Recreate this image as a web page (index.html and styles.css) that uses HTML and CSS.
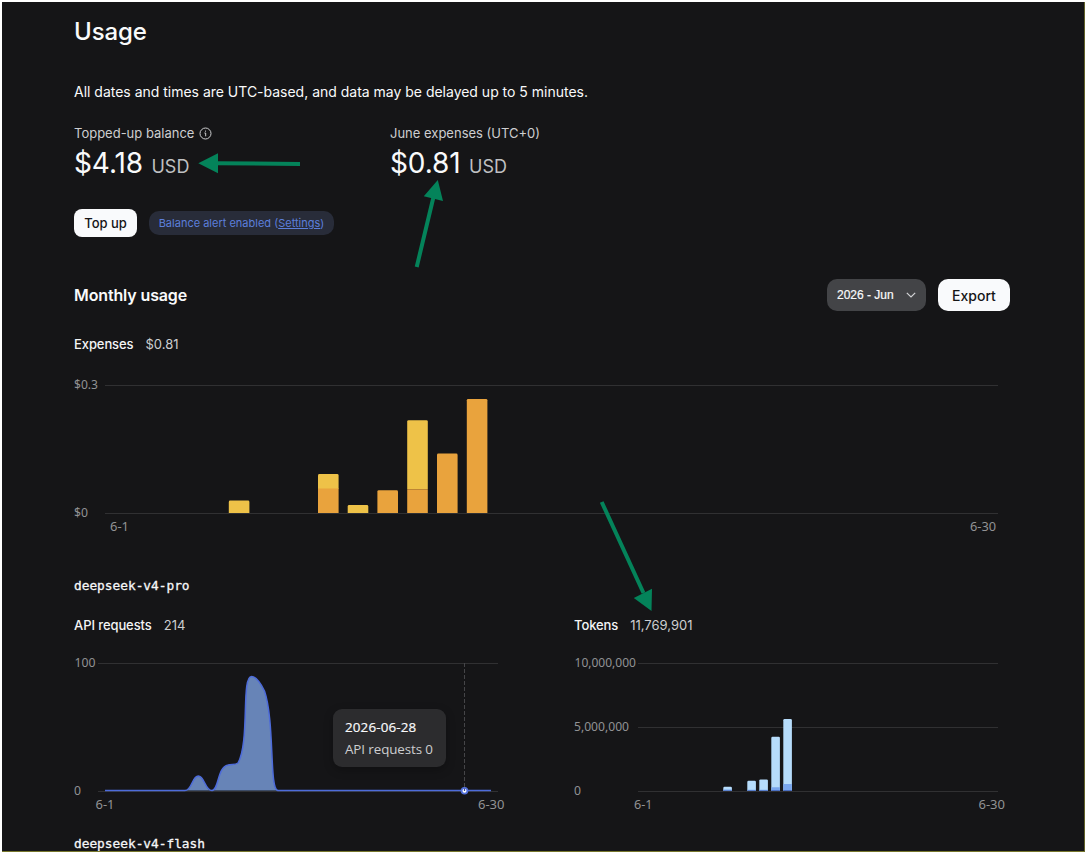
FILE: index.html
```html
<!DOCTYPE html>
<html lang="en">
<head>
<meta charset="utf-8">
<title>Usage</title>
<link rel="stylesheet" href="styles.css">
</head>
<body>
<main class="page">
  <h1 class="title">Usage</h1>
  <p class="note"><span>All dates and times are UTC-based, and data may be delayed up to 5 minutes.</span></p>

  <section class="stats">
    <div class="stat">
      <div class="stat-label"><span>Topped-up balance</span>
        <svg class="info" width="13" height="13" viewBox="0 0 13 13"><circle cx="6.5" cy="6.5" r="5.5"/><path d="M5.4 6h1.3v3.3M6.5 3.6v1.1"/></svg>
      </div>
      <div class="stat-value"><span class="amount">$4.18</span><span class="currency">USD</span></div>
    </div>
    <div class="stat">
      <div class="stat-label"><span>June expenses (UTC+0)</span></div>
      <div class="stat-value"><span class="amount">$0.81</span><span class="currency">USD</span></div>
    </div>
  </section>

  <div class="actions">
    <button class="btn btn-small">Top up</button>
    <div class="alert"><span>Balance alert enabled (<a>Settings</a>)</span></div>
  </div>

  <section class="monthly">
    <h2 class="subtitle">Monthly usage</h2>
    <div class="controls">
      <div class="select"><span>2026 - Jun</span>
        <svg width="12" height="8" viewBox="0 0 12 8"><path d="M1.8 1.8 6 6l4.2-4.2"/></svg>
      </div>
      <button class="btn btn-large">Export</button>
    </div>
  </section>

  <div class="metric"><b>Expenses</b><span>$0.81</span></div>
  <svg class="chart" width="936" height="223" viewBox="74 353 936 223">
    <path class="grid" d="M105 385.5H998M105 513.5H998"/>
    <g class="axis">
      <text x="74" y="389.3" textLength="24" lengthAdjust="spacingAndGlyphs">$0.3</text>
      <text x="74" y="517.3" textLength="14" lengthAdjust="spacingAndGlyphs">$0</text>
      <text x="110" y="531.3" textLength="19" lengthAdjust="spacingAndGlyphs">6-1</text>
      <text x="970" y="531.3" textLength="26" lengthAdjust="spacingAndGlyphs">6-30</text>
    </g>
    <g class="flash">
      <path d="M228.8 513V502q0-1.4 1.4-1.4h17.8q1.4 0 1.4 1.4v11z"/>
      <path d="M318 489V475.4q0-1.4 1.4-1.4h17.8q1.4 0 1.4 1.4V489z"/>
      <path d="M347.7 513V506.4q0-1.4 1.4-1.4h17.8q1.4 0 1.4 1.4V513z"/>
      <path d="M407.2 489V421.6q0-1.4 1.4-1.4h17.8q1.4 0 1.4 1.4V489z"/>
    </g>
    <g class="pro">
      <path d="M318 488.5h20.6V513H318z"/>
      <path d="M377.4 513V491.6q0-1.4 1.4-1.4h17.8q1.4 0 1.4 1.4V513z"/>
      <path d="M407.2 489.2h20.6V513h-20.6z"/>
      <path d="M437 513V454.9q0-1.4 1.4-1.4h17.8q1.4 0 1.4 1.4V513z"/>
      <path d="M466.8 513V400.3q0-1.4 1.4-1.4H486q1.4 0 1.4 1.4V513z"/>
    </g>
  </svg>

  <h3 class="model"><span>deepseek-v4-pro</span></h3>
  <section class="split">
    <div class="panel">
      <div class="metric"><b>API requests</b><span>214</span></div>
      <svg class="chart" width="436" height="200" viewBox="74 634 436 200">
        <path class="grid" d="M98 663.5H498M98 791.5H498"/>
        <g class="axis">
          <text x="74.5" y="667.3" textLength="21" lengthAdjust="spacingAndGlyphs">100</text>
          <text x="74" y="795.3" textLength="7" lengthAdjust="spacingAndGlyphs">0</text>
          <text x="95.5" y="809.3" textLength="19" lengthAdjust="spacingAndGlyphs">6-1</text>
          <text x="478" y="809.3" textLength="26.5" lengthAdjust="spacingAndGlyphs">6-30</text>
        </g>
        <path class="area" d="M105 790.5H185C192 790.5 192 776 198.3 776S205 790.5 212 790.5C219 790.5 217 767 228 765C232 764 235 765 238 763C250 742 241 676.5 251.5 676.5C257 676.5 262 686 264.5 691C275 722 269 790.5 278 790.5H491"/>
        <path class="cursor" d="M464.5 663V791"/>
        <circle class="halo" cx="464.5" cy="790.8" r="2.9"/>
        <path class="tick" d="M464.5 788.5v2.5"/>
      </svg>
      <div class="tooltip"><div class="tip-date">2026-06-28</div><div class="tip-value">API requests 0</div></div>
    </div>
    <div class="panel">
      <div class="metric"><b>Tokens</b><span class="tokens">11,769,901</span></div>
      <svg class="chart" width="436" height="200" viewBox="574 634 436 200">
        <path class="grid" d="M638 663.5H998M638 727.5H998M638 791.5H998"/>
        <g class="axis">
          <text x="574.5" y="667.3" textLength="61.5" lengthAdjust="spacingAndGlyphs">10,000,000</text>
          <text x="574" y="731.3" textLength="55" lengthAdjust="spacingAndGlyphs">5,000,000</text>
          <text x="574" y="795.3" textLength="7" lengthAdjust="spacingAndGlyphs">0</text>
          <text x="634" y="809.3" textLength="18.5" lengthAdjust="spacingAndGlyphs">6-1</text>
          <text x="978.5" y="809.3" textLength="26.5" lengthAdjust="spacingAndGlyphs">6-30</text>
        </g>
        <g class="hit">
          <path d="M723.3 791V788q0-1.2 1.2-1.2h6.2q1.2 0 1.2 1.2v3z"/>
          <path d="M747.3 791V782q0-1.2 1.2-1.2h6.2q1.2 0 1.2 1.2v9z"/>
          <path d="M759.3 791V780.6q0-1.2 1.2-1.2h6.2q1.2 0 1.2 1.2V791z"/>
          <path d="M771.3 791V738q0-1.2 1.2-1.2h6.2q1.2 0 1.2 1.2v53z"/>
          <path d="M783.3 791V720.2q0-1.2 1.2-1.2h6.2q1.2 0 1.2 1.2V791z"/>
        </g>
        <path class="miss" d="M723.3 789.5h8.6v1h-8.6zM747.3 789.8h8.6v.9h-8.6zM759.3 789.8h8.6v.9h-8.6zM771.3 787.3h8.6v3.2h-8.6zM783.3 784h8.6v6.5h-8.6z"/>
        <path class="out" d="M723.3 790.2h8.6v.8h-8.6zM747.3 790.2h8.6v.8h-8.6zM759.3 790.2h8.6v.8h-8.6zM771.3 790h8.6v1h-8.6zM783.3 790h8.6v1h-8.6z"/>
      </svg>
    </div>
  </section>
  <h3 class="model"><span>deepseek-v4-flash</span></h3>

  <svg class="arrows" width="1083" height="850" viewBox="2 2 1083 850">
    <path d="M300 164 216 163.2M416.7 267 433.5 197M601.7 502 643.5 593"/>
    <path class="heads" d="M198.3 163.3 218 153.3V173.3zM437.8 180 423.8 196.3 443 201zM651.5 611 633.8 598 652 588.8z"/>
  </svg>
</main>
</body>
</html>
```
FILE: styles.css
```css
* { box-sizing: border-box; }
body { margin: 0; background: #fff; font-family: Inter, "Liberation Sans", sans-serif; color: #f9fafb; overflow: hidden; }
.page {
  position: relative;
  width: 1083px; height: 850px;
  margin: 2px;
  padding: 15px 74px 0 72px;
  overflow: hidden;
  background: #151517;
  border-right: 1px solid #62622a;
  border-bottom: 1px solid #77772c;
}
h1, h2, h3, p { margin: 0; }
.title { font-size: 24px; line-height: 30px; font-weight: 500; letter-spacing: -0.1px; }
.note { margin-top: 35px; font-size: 14px; line-height: 20px; letter-spacing: -0.01px; }
.stats { display: grid; grid-template-columns: 316px 1fr; margin-top: 22px; }
.stat-label { display: flex; align-items: center; gap: 5px; height: 18px; font-size: 13px; line-height: 18px; color: #cdced0; }
.info { fill: none; stroke: #cdced0; stroke-width: 1; }
.stat-value { display: flex; align-items: baseline; gap: 8.5px; margin-top: 4px; height: 34px; line-height: 35px; }
.amount { font-size: 28px; letter-spacing: -0.1px; }
.currency { font-size: 18px; color: #bfc0c2; }
.actions { display: flex; align-items: center; gap: 12px; margin-top: 29px; }
.btn { border: 0; padding: 0; background: #f9fafc; color: #151517; font-family: inherit; font-weight: 500; }
.btn-small { width: 63px; height: 28px; border-radius: 8px; font-size: 13px; }
.btn-large { width: 72px; height: 32px; border-radius: 10px; font-size: 14px; }
.alert { width: 185px; height: 24px; border-radius: 10px; background: #282c39; color: #5c7fdb; font-size: 11px; line-height: 25px; text-align: center; white-space: nowrap; }
.alert a { text-decoration: underline; text-underline-offset: 1px; }
.monthly { display: flex; align-items: center; justify-content: space-between; margin-top: 42px; height: 32px; }
.subtitle { font-size: 16px; font-weight: 600; line-height: 24px; letter-spacing: -0.13px; }
.controls { display: flex; gap: 12px; }
.select { display: flex; align-items: center; justify-content: space-between; width: 99px; height: 32px; padding: 0 9px 0 10px; border-radius: 10px; background: #434447; font-family: "Liberation Sans", Arial, sans-serif; font-size: 12px; -webkit-text-stroke: 0.2px #f9fafb; }
.select svg { fill: none; stroke: #d2d3d5; stroke-width: 1.2; }
.metric { display: flex; gap: 12px; height: 18px; font-size: 13px; line-height: 18px; color: #cdced0; }
.metric b { font-weight: 500; color: #f3f4f5; letter-spacing: -0.09px; }
.monthly + .metric { margin-top: 24px; }
.chart { display: block; }
.grid { fill: none; stroke: #303032; stroke-width: 1; }
.axis { fill: #919294; font: 12.6px "Noto Sans", sans-serif; }
.flash { fill: #eec248; }
.pro { fill: #e9a33d; }
.area { fill: #6784b7; stroke: #4d6bda; stroke-width: 1.5; }
.cursor { stroke: #454548; stroke-dasharray: 4 2; }
.halo { fill: #fff; stroke: #5472dc; stroke-width: 1.8; }
.tick { stroke: #39488f; stroke-width: 1.2; }
.hit { fill: #b6dcfb; }
.miss { fill: #79a6ed; }
.out { fill: #4a6fc2; }
.model { height: 20px; font: 400 12.8px/20px "DejaVu Sans Mono", monospace; -webkit-text-stroke: 0.3px #f3f4f5; }
.split { display: grid; grid-template-columns: 436px 436px; column-gap: 64px; margin-top: 20px; }
.panel { position: relative; }
.tooltip {
  position: absolute; left: 259px; top: 93px;
  width: 113px; height: 58px; padding: 7px 12px;
  border-radius: 9px; background: #2c2c2e; box-shadow: 0 3px 10px #0004;
  font-family: "Open Sans", sans-serif; font-size: 13.4px; line-height: 22px; white-space: nowrap;
}
.tip-date { font-weight: 500; -webkit-text-stroke: 0.2px #f9fafb; letter-spacing: 0.15px; }
.tip-value { color: #cdced0; letter-spacing: -0.1px; }
.arrows { position: absolute; left: 0; top: 0; fill: none; stroke: #04835a; stroke-width: 4; pointer-events: none; }
.heads { fill: #04835a; stroke: none; }
```
